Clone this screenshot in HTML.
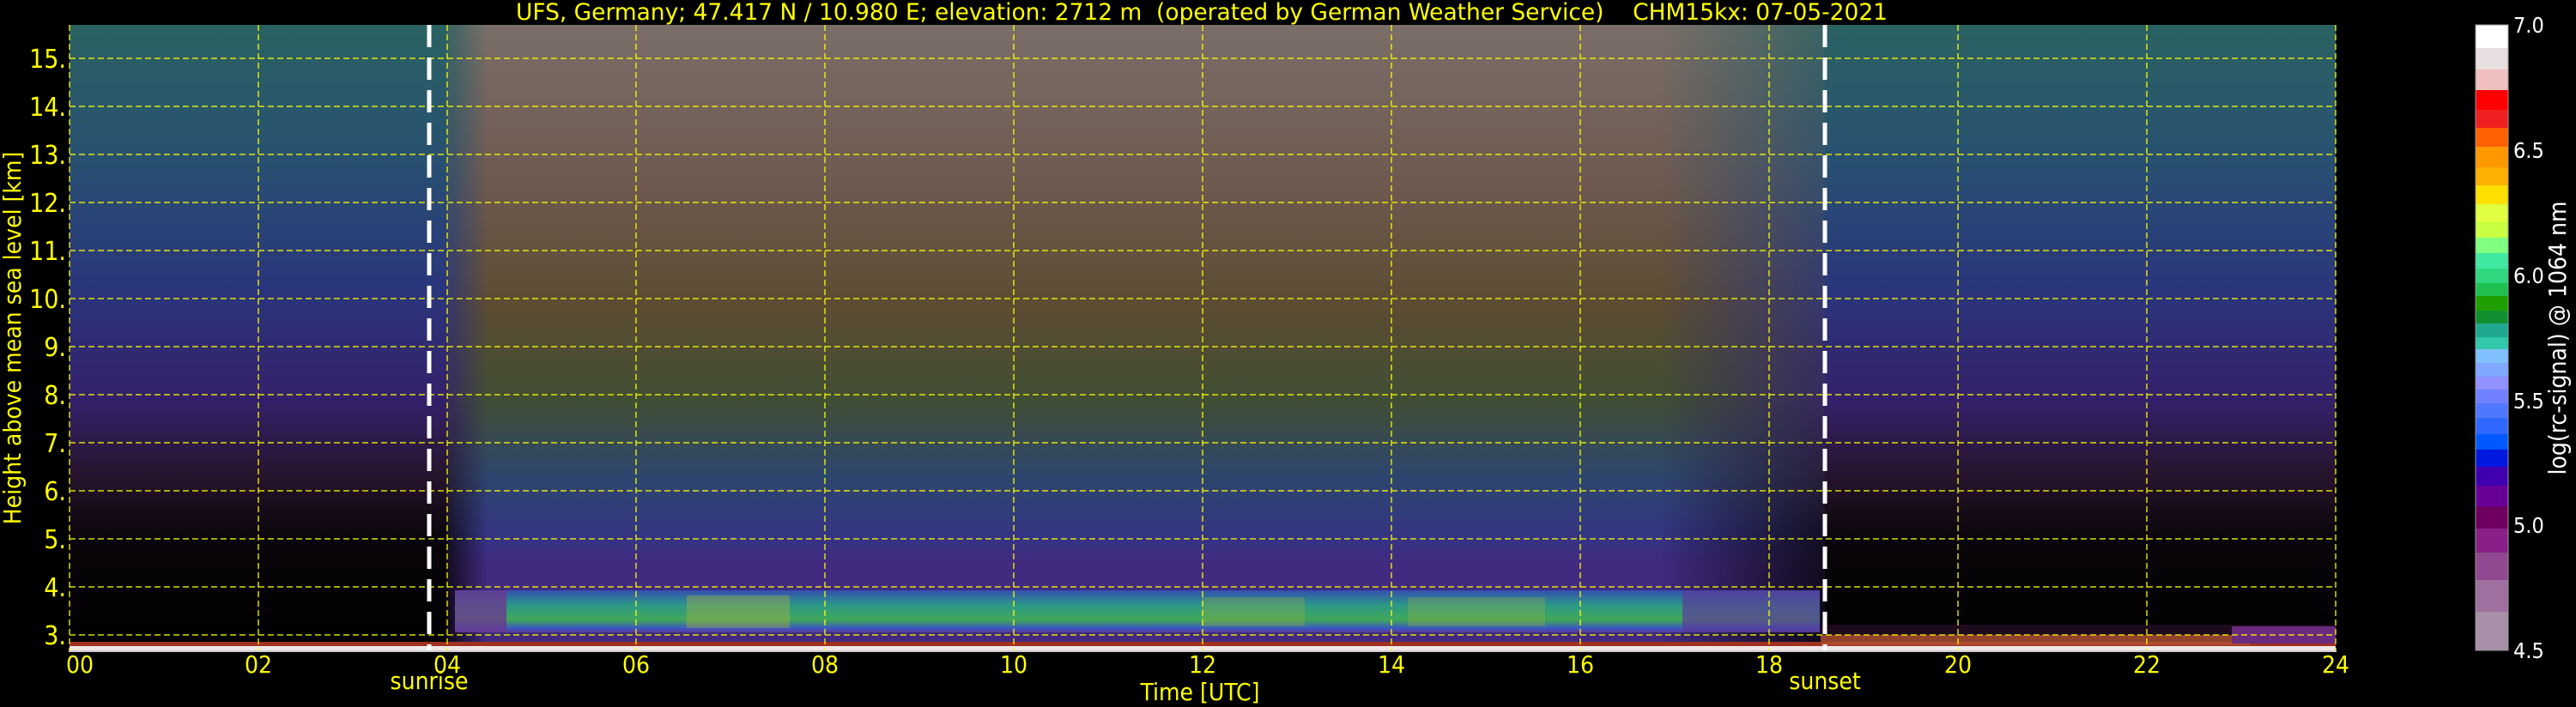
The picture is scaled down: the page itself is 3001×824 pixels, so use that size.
<!DOCTYPE html>
<html><head><meta charset="utf-8"><style>
html,body{margin:0;padding:0;background:#000;width:3001px;height:824px;overflow:hidden}
svg{display:block}
text{font-family:"DejaVu Sans Condensed","DejaVu Sans","Liberation Sans",sans-serif}
</style></head><body>
<svg width="3001" height="824" viewBox="0 0 3001 824" xmlns="http://www.w3.org/2000/svg">
<defs>
<linearGradient id="side" x1="0" y1="0" x2="0" y2="1">
<stop offset="0" stop-color="#2a6262"/>
<stop offset="0.2" stop-color="#285270"/>
<stop offset="0.42" stop-color="#2a367c"/>
<stop offset="0.6" stop-color="#34206a"/>
<stop offset="0.72" stop-color="#26142c"/>
<stop offset="0.82" stop-color="#0a050a"/>
<stop offset="1" stop-color="#000"/>
</linearGradient>
<linearGradient id="mid" x1="0" y1="0" x2="0" y2="1">
<stop offset="0" stop-color="#7a6e68"/>
<stop offset="0.25" stop-color="#6e5a50"/>
<stop offset="0.45" stop-color="#5c4c32"/>
<stop offset="0.6" stop-color="#404e34"/>
<stop offset="0.72" stop-color="#2e466e"/>
<stop offset="0.82" stop-color="#343484"/>
<stop offset="0.86" stop-color="#422a80"/>
<stop offset="1" stop-color="#422a80"/>
</linearGradient>
<linearGradient id="midmask" x1="0" y1="0" x2="1" y2="0">
<stop offset="0" stop-color="#fff" stop-opacity="0.2"/>
<stop offset="0.03" stop-color="#fff" stop-opacity="1"/>
<stop offset="0.88" stop-color="#fff" stop-opacity="1"/>
<stop offset="1" stop-color="#fff" stop-opacity="0.2"/>
</linearGradient>
<mask id="mm"><rect x="520" y="29" width="1606" height="730" fill="url(#midmask)"/></mask>
<linearGradient id="band" x1="0" y1="0" x2="0" y2="1">
<stop offset="0" stop-color="#3450b0"/>
<stop offset="0.35" stop-color="#2c9888"/>
<stop offset="0.7" stop-color="#40a858"/>
<stop offset="0.9" stop-color="#3a58c0"/>
<stop offset="1" stop-color="#5a3a98"/>
</linearGradient>
</defs>
<rect x="81" y="29" width="2640" height="730" fill="url(#side)"/>
<rect x="520" y="29" width="1606" height="730" fill="url(#mid)" mask="url(#mm)"/>
<!-- cloud band -->
<rect x="530" y="688" width="1590" height="49" fill="url(#band)"/>
<rect x="530" y="688" width="60" height="49" fill="#6a3a90" opacity="0.8"/>
<rect x="1960" y="688" width="160" height="49" fill="#5a3a98" opacity="0.7"/>
<rect x="800" y="694" width="120" height="38" fill="#b0b040" opacity="0.4"/>
<rect x="1400" y="696" width="120" height="34" fill="#a0b040" opacity="0.3"/>
<rect x="1640" y="696" width="160" height="34" fill="#a0b040" opacity="0.3"/>
<rect x="2121" y="728" width="600" height="22" fill="#301030" opacity="0.6"/>
<!-- ground strip -->
<rect x="81" y="748" width="2640" height="6" fill="#a03020"/>
<rect x="81" y="753" width="2640" height="6" fill="#f0e8e8"/>
<rect x="2121" y="740" width="500" height="12" fill="#b05030" opacity="0.8"/>
<rect x="2600" y="730" width="121" height="20" fill="#6a2a80"/>
<g stroke="#ffff00" stroke-width="1.5" stroke-dasharray="7,4" opacity="0.85">
<line x1="81" y1="68" x2="2721" y2="68"/><line x1="81" y1="124" x2="2721" y2="124"/>
<line x1="81" y1="180" x2="2721" y2="180"/><line x1="81" y1="236" x2="2721" y2="236"/>
<line x1="81" y1="292" x2="2721" y2="292"/><line x1="81" y1="348" x2="2721" y2="348"/>
<line x1="81" y1="404" x2="2721" y2="404"/><line x1="81" y1="460" x2="2721" y2="460"/>
<line x1="81" y1="516" x2="2721" y2="516"/><line x1="81" y1="572" x2="2721" y2="572"/>
<line x1="81" y1="628" x2="2721" y2="628"/><line x1="81" y1="684" x2="2721" y2="684"/>
<line x1="81" y1="740" x2="2721" y2="740"/>
<line x1="81" y1="29" x2="81" y2="759"/><line x1="301" y1="29" x2="301" y2="759"/>
<line x1="521" y1="29" x2="521" y2="759"/><line x1="741" y1="29" x2="741" y2="759"/>
<line x1="961" y1="29" x2="961" y2="759"/><line x1="1181" y1="29" x2="1181" y2="759"/>
<line x1="1401" y1="29" x2="1401" y2="759"/><line x1="1621" y1="29" x2="1621" y2="759"/>
<line x1="1841" y1="29" x2="1841" y2="759"/><line x1="2061" y1="29" x2="2061" y2="759"/>
<line x1="2281" y1="29" x2="2281" y2="759"/><line x1="2501" y1="29" x2="2501" y2="759"/>
<line x1="2721" y1="29" x2="2721" y2="759"/>
</g>
<g stroke="#fff" stroke-width="5" stroke-dasharray="26,12">
<line x1="500" y1="29" x2="500" y2="759"/>
<line x1="2126" y1="29" x2="2126" y2="759"/>
</g>
<rect x="80" y="758" width="2642" height="2" fill="#ccc"/>
<text x="601" y="23" font-size="27" fill="#ffff00" textLength="1598" lengthAdjust="spacingAndGlyphs" xml:space="preserve">UFS, Germany; 47.417 N / 10.980 E; elevation: 2712 m&#160;&#160;(operated by German Weather Service)&#160;&#160;&#160;&#160;CHM15kx: 07-05-2021</text>
<g font-size="30" fill="#ffff00" text-anchor="end">
<text x="77" y="79">15.</text><text x="77" y="135">14.</text><text x="77" y="191">13.</text>
<text x="77" y="247">12.</text><text x="77" y="303">11.</text><text x="77" y="359">10.</text>
<text x="77" y="415">9.</text><text x="77" y="471">8.</text><text x="77" y="527">7.</text>
<text x="77" y="583">6.</text><text x="77" y="639">5.</text><text x="77" y="695">4.</text>
<text x="77" y="751">3.</text>
</g>
<text transform="translate(24,394) rotate(-90)" font-size="28" fill="#ffff00" text-anchor="middle">Height above mean sea level [km]</text>
<g font-size="28" fill="#ffff00" text-anchor="middle">
<text x="93" y="784">00</text><text x="301" y="784">02</text><text x="521" y="784">04</text>
<text x="741" y="784">06</text><text x="961" y="784">08</text><text x="1181" y="784">10</text>
<text x="1401" y="784">12</text><text x="1621" y="784">14</text><text x="1841" y="784">16</text>
<text x="2061" y="784">18</text><text x="2281" y="784">20</text><text x="2501" y="784">22</text>
<text x="2721" y="784">24</text>
<text x="500" y="803">sunrise</text><text x="2126" y="803">sunset</text>
<text x="1398" y="816">Time [UTC]</text>
</g>
<g>
<rect x="2884" y="29" width="38" height="28" fill="#ffffff"/>
<rect x="2884" y="56" width="38" height="26" fill="#e8e0e0"/>
<rect x="2884" y="81" width="38" height="25" fill="#f0c0c0"/>
<rect x="2884" y="105" width="38" height="24" fill="#ff0000"/>
<rect x="2884" y="128" width="38" height="22" fill="#f02020"/>
<rect x="2884" y="149" width="38" height="23" fill="#ff6000"/>
<rect x="2884" y="171" width="38" height="25" fill="#ff9800"/>
<rect x="2884" y="195" width="38" height="22" fill="#ffb000"/>
<rect x="2884" y="216" width="38" height="23" fill="#ffe000"/>
<rect x="2884" y="238" width="38" height="22" fill="#e0ff40"/>
<rect x="2884" y="259" width="38" height="19" fill="#c8ff40"/>
<rect x="2884" y="277" width="38" height="19" fill="#80ff80"/>
<rect x="2884" y="295" width="38" height="19" fill="#40e8a0"/>
<rect x="2884" y="313" width="38" height="18" fill="#30d880"/>
<rect x="2884" y="330" width="38" height="16" fill="#20c050"/>
<rect x="2884" y="345" width="38" height="18" fill="#20a000"/>
<rect x="2884" y="362" width="38" height="16" fill="#109030"/>
<rect x="2884" y="377" width="38" height="17" fill="#20a890"/>
<rect x="2884" y="393" width="38" height="15" fill="#30c8a8"/>
<rect x="2884" y="407" width="38" height="17" fill="#80c0ff"/>
<rect x="2884" y="423" width="38" height="17" fill="#80a8ff"/>
<rect x="2884" y="439" width="38" height="16" fill="#9090ff"/>
<rect x="2884" y="454" width="38" height="17" fill="#7080ff"/>
<rect x="2884" y="470" width="38" height="18" fill="#5078ff"/>
<rect x="2884" y="487" width="38" height="20" fill="#3068ff"/>
<rect x="2884" y="506" width="38" height="19" fill="#0058ff"/>
<rect x="2884" y="524" width="38" height="21" fill="#0018e0"/>
<rect x="2884" y="544" width="38" height="23" fill="#4000b0"/>
<rect x="2884" y="566" width="38" height="25" fill="#680098"/>
<rect x="2884" y="590" width="38" height="27" fill="#700060"/>
<rect x="2884" y="616" width="38" height="29" fill="#882088"/>
<rect x="2884" y="644" width="38" height="33" fill="#904890"/>
<rect x="2884" y="676" width="38" height="38" fill="#a070a0"/>
<rect x="2884" y="713" width="38" height="45" fill="#a890a8"/>
<rect x="2884" y="29" width="38" height="729" fill="none" stroke="#999" stroke-width="1"/>
</g>
<g font-size="25" fill="#ffffff" font-family="DejaVu Sans, sans-serif">
<text x="2928" y="38">7.0</text><text x="2928" y="184">6.5</text><text x="2928" y="330">6.0</text>
<text x="2928" y="476">5.5</text><text x="2928" y="621">5.0</text><text x="2928" y="767">4.5</text>
</g>
<text transform="translate(2989,394) rotate(-90)" font-size="28" fill="#ffffff" text-anchor="middle">log(rc-signal) @ 1064 nm</text>
</svg>
</body></html>
